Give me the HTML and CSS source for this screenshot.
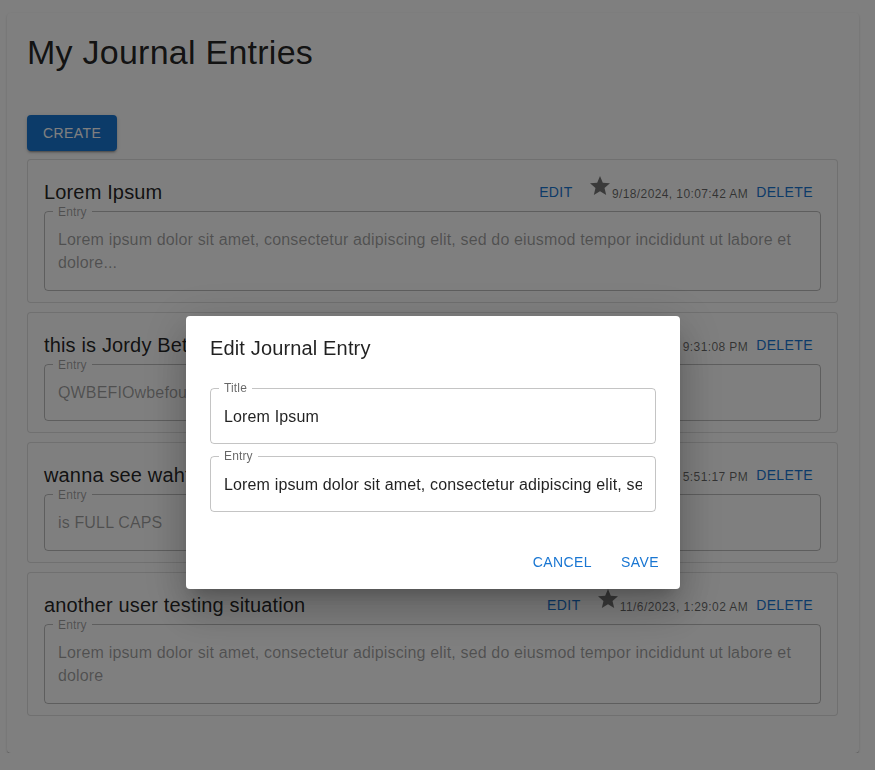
FILE: index.html
```html
<!DOCTYPE html>
<html lang="en">
<head>
<meta charset="utf-8">
<title>My Journal Entries</title>
<link rel="stylesheet" href="styles.css">
</head>
<body>
<main class="paper">
  <h1 class="page-title">My Journal Entries</h1>
  <button class="btn-contained" type="button">Create</button>
  <section class="entries">
    <article class="card">
      <div class="card-head">
        <h2 class="card-title">Lorem Ipsum</h2>
        <div class="card-actions">
          <button class="btn-text" type="button">Edit</button>
          <span class="stamp"><svg class="star" viewBox="0 0 24 24" aria-hidden="true"><path d="M12 17.27L18.18 21l-1.64-7.03L22 9.24l-7.19-.61L12 2 9.19 8.63 2 9.24l5.46 4.73L5.82 21z"/></svg>9/18/2024, 10:07:42 AM</span>
          <button class="btn-text" type="button">Delete</button>
        </div>
      </div>
      <fieldset class="field field-disabled">
        <legend>Entry</legend>
        <div class="field-value">Lorem ipsum dolor sit amet, consectetur adipiscing elit, sed do eiusmod tempor incididunt ut labore et dolore...</div>
      </fieldset>
    </article>

    <article class="card">
      <div class="card-head">
        <h2 class="card-title">this is Jordy Betts</h2>
        <div class="card-actions">
          <button class="btn-text" type="button">Edit</button>
          <span class="stamp"><svg class="star" viewBox="0 0 24 24" aria-hidden="true"><path d="M12 17.27L18.18 21l-1.64-7.03L22 9.24l-7.19-.61L12 2 9.19 8.63 2 9.24l5.46 4.73L5.82 21z"/></svg>10/24/2023, 9:31:08 PM</span>
          <button class="btn-text" type="button">Delete</button>
        </div>
      </div>
      <fieldset class="field field-disabled">
        <legend>Entry</legend>
        <div class="field-value">QWBEFIOwbefoubwef</div>
      </fieldset>
    </article>

    <article class="card">
      <div class="card-head">
        <h2 class="card-title">wanna see wahts up</h2>
        <div class="card-actions">
          <button class="btn-text" type="button">Edit</button>
          <span class="stamp"><svg class="star" viewBox="0 0 24 24" aria-hidden="true"><path d="M12 17.27L18.18 21l-1.64-7.03L22 9.24l-7.19-.61L12 2 9.19 8.63 2 9.24l5.46 4.73L5.82 21z"/></svg>10/24/2023, 5:51:17 PM</span>
          <button class="btn-text" type="button">Delete</button>
        </div>
      </div>
      <fieldset class="field field-disabled">
        <legend>Entry</legend>
        <div class="field-value">is FULL CAPS</div>
      </fieldset>
    </article>

    <article class="card">
      <div class="card-head">
        <h2 class="card-title">another user testing situation</h2>
        <div class="card-actions">
          <button class="btn-text" type="button">Edit</button>
          <span class="stamp"><svg class="star" viewBox="0 0 24 24" aria-hidden="true"><path d="M12 17.27L18.18 21l-1.64-7.03L22 9.24l-7.19-.61L12 2 9.19 8.63 2 9.24l5.46 4.73L5.82 21z"/></svg>11/6/2023, 1:29:02 AM</span>
          <button class="btn-text" type="button">Delete</button>
        </div>
      </div>
      <fieldset class="field field-disabled">
        <legend>Entry</legend>
        <div class="field-value">Lorem ipsum dolor sit amet, consectetur adipiscing elit, sed do eiusmod tempor incididunt ut labore et dolore</div>
      </fieldset>
    </article>
  </section>
</main>

<div class="backdrop"></div>
<div class="dialog-layer">
  <div class="dialog" role="dialog" aria-labelledby="dlg-title">
    <h2 class="dialog-title" id="dlg-title">Edit Journal Entry</h2>
    <div class="dialog-content">
      <fieldset class="field">
        <legend>Title</legend>
        <div class="field-value single">Lorem Ipsum</div>
      </fieldset>
      <fieldset class="field field-gap">
        <legend>Entry</legend>
        <div class="field-value single">Lorem ipsum dolor sit amet, consectetur adipiscing elit, sed do eiusmod tempor incididunt ut labore et dolore...</div>
      </fieldset>
    </div>
    <div class="dialog-actions">
      <button class="btn-text" type="button">Cancel</button>
      <button class="btn-text" type="button">Save</button>
    </div>
  </div>
</div>
</body>
</html>
```

FILE: styles.css
```css
* {
  box-sizing: border-box;
}

html, body {
  margin: 0;
  padding: 0;
  background: #ffffff;
  font-family: "Liberation Sans", Arial, Helvetica, sans-serif;
  color: rgba(0, 0, 0, 0.87);
}

.paper {
  display: block;
  margin: 13px 16px 0 7px;
  padding: 19px 21px 37px 20px;
  background: #ffffff;
  border-radius: 4px;
  box-shadow: 0 2px 1px -1px rgba(0, 0, 0, 0.2),
              0 1px 1px 0 rgba(0, 0, 0, 0.14),
              0 1px 3px 0 rgba(0, 0, 0, 0.12);
}

.page-title {
  margin: 0 0 41px;
  font-size: 34px;
  font-weight: 400;
  line-height: 1.235;
  letter-spacing: 0.25px;
}

.btn-contained {
  display: block;
  margin: 0 0 8px;
  padding: 6px 16px;
  border: 0;
  border-radius: 4px;
  background: #1976d2;
  color: #ffffff;
  font-family: inherit;
  font-size: 14px;
  font-weight: 400;
  line-height: 24.5px;
  letter-spacing: 0.4px;
  text-transform: uppercase;
  box-shadow: 0 3px 1px -2px rgba(0, 0, 0, 0.2),
              0 2px 2px 0 rgba(0, 0, 0, 0.14),
              0 1px 5px 0 rgba(0, 0, 0, 0.12);
}

.entries {
  display: flex;
  flex-direction: column;
  gap: 9.5px;
}

.card {
  border: 1px solid rgba(0, 0, 0, 0.12);
  border-radius: 4px;
  padding: 13.5px 16px 11px;
  background: #ffffff;
}

.card-head {
  display: flex;
  justify-content: space-between;
  align-items: center;
  margin-bottom: -4.5px;
}

.card-title {
  margin: 0;
  font-size: 20px;
  font-weight: 400;
  line-height: 32px;
  letter-spacing: 0.15px;
  white-space: nowrap;
}

.card-actions {
  display: flex;
  align-items: flex-start;
}

.btn-text {
  min-width: 64px;
  margin: 0;
  padding: 6px 8px;
  border: 0;
  border-radius: 4px;
  background: transparent;
  color: #1976d2;
  font-family: inherit;
  font-size: 14px;
  font-weight: 400;
  line-height: 24.5px;
  letter-spacing: 0.4px;
  text-transform: uppercase;
}

.stamp {
  display: block;
  font-size: 12px;
  line-height: 19.92px;
  letter-spacing: 0.4px;
  color: rgba(0, 0, 0, 0.6);
  white-space: nowrap;
}

.star {
  width: 24px;
  height: 24px;
  vertical-align: baseline;
  fill: rgba(0, 0, 0, 0.54);
}

.field {
  display: block;
  min-width: 0;
  margin: 0;
  padding: 10.5px 13px 15.5px;
  border: 1px solid rgba(0, 0, 0, 0.23);
  border-radius: 4px;
}

.field legend {
  margin-left: -5px;
  padding: 0 5px;
  font-size: 12px;
  line-height: 12px;
  letter-spacing: 0.15px;
  color: rgba(0, 0, 0, 0.6);
}

.field-value {
  font-size: 16px;
  line-height: 23px;
  letter-spacing: 0.15px;
  color: rgba(0, 0, 0, 0.87);
}

.field-value.single {
  white-space: nowrap;
  overflow: hidden;
}

.field-disabled {
  border-color: rgba(0, 0, 0, 0.26);
}

.field-disabled legend,
.field-disabled .field-value {
  color: rgba(0, 0, 0, 0.38);
}

.backdrop {
  position: fixed;
  inset: 0;
  background: rgba(0, 0, 0, 0.5);
}

.dialog-layer {
  position: fixed;
  inset: 0;
  padding: 316px 0 0 186px;
}

.dialog {
  width: 494px;
  background: #ffffff;
  border-radius: 4px;
  box-shadow: 0 11px 15px -7px rgba(0, 0, 0, 0.2),
              0 24px 38px 3px rgba(0, 0, 0, 0.14),
              0 9px 46px 8px rgba(0, 0, 0, 0.12);
}

.dialog-title {
  margin: 0;
  padding: 16px 24px;
  font-size: 20px;
  font-weight: 400;
  line-height: 32px;
  letter-spacing: 0.15px;
}

.dialog-content {
  padding: 2px 24px 24px;
}

.field-gap {
  margin-top: 6px;
}

.dialog-actions {
  display: flex;
  justify-content: flex-end;
  gap: 8px;
  padding: 8px;
}
```
